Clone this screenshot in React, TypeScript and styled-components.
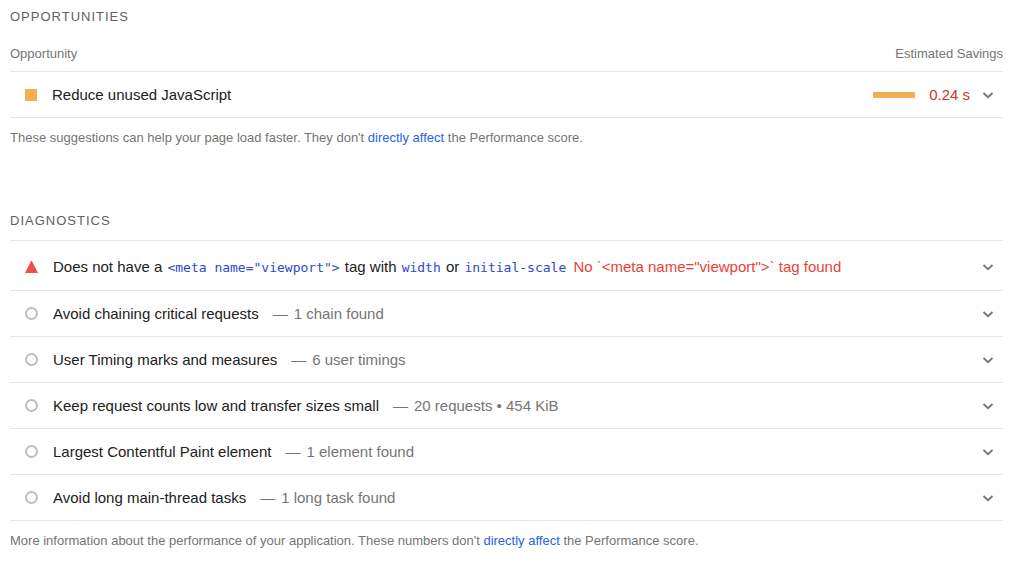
import React from "react";
import styled, { createGlobalStyle } from "styled-components";

const GlobalStyle = createGlobalStyle`
  * { box-sizing: border-box; }
  body {
    margin: 0;
    background: #fff;
    color: #212121;
    font-family: "Liberation Sans", Arial, sans-serif;
    font-size: 15px;
    line-height: 20px;
  }
`;

const Report = styled.main`
  padding: 7px 21px 6px 10px;
`;

const Group = styled.section`
  & + & {
    margin-top: 63px;
  }
`;

const GroupTitle = styled.h2<{ $gap: number }>`
  margin: 0 0 ${(p) => p.$gap}px;
  font-size: 13px;
  font-weight: 400;
  line-height: 20px;
  letter-spacing: 1px;
  text-transform: uppercase;
  color: #616161;
`;

const ColumnHeader = styled.div`
  display: flex;
  justify-content: space-between;
  padding-bottom: 7px;
  font-size: 13px;
  color: #757575;
`;

const AuditList = styled.ul`
  margin: 0;
  padding: 0;
  list-style: none;
  border-top: 1px solid #e6e6e6;
`;

const Audit = styled.li`
  border-bottom: 1px solid #e6e6e6;
`;

const AuditToggle = styled.button<{ $tall?: boolean }>`
  display: flex;
  align-items: center;
  gap: 15px;
  width: 100%;
  min-height: ${(p) => (p.$tall ? 49 : 45)}px;
  padding: ${(p) => (p.$tall ? "3px 8px 0 15px" : "0 8px 0 15px")};
  border: 0;
  background: none;
  color: inherit;
  font: inherit;
  text-align: left;
  cursor: pointer;
`;

const AuditTitle = styled.span`
  flex: 1;
`;

const Dash = styled.span`
  margin: 0 6px 0 14px;
  color: #757575;
`;

const Detail = styled.span`
  color: #757575;
`;

const ErrorText = styled.span`
  margin-left: 2px;
  color: #eb3f36;
`;

const Code = styled.code`
  margin: 0 1px;
  font-family: "DejaVu Sans Mono", monospace;
  font-size: 13px;
  color: #2a4acb;
`;

const Square = styled.span`
  width: 12px;
  height: 12px;
  background: #f5ae52;
`;

const Ring = styled.span`
  width: 13px;
  height: 13px;
  border: 2px solid #bdbdbd;
  border-radius: 50%;
`;

const Savings = styled.span`
  display: flex;
  align-items: center;
  gap: 14px;
  margin-right: -4px;
  color: #c7371f;
`;

const SavingsBar = styled.span`
  width: 42px;
  height: 6px;
  border-radius: 1px;
  background: #f5ae52;
`;

const Note = styled.p`
  margin: 0;
  padding-top: 10px;
  font-size: 13px;
  color: #757575;
`;

const NoteLink = styled.a`
  color: #2962e8;
  text-decoration: none;
`;

const Triangle = () => (
  <svg width="13" height="13" viewBox="0 0 13 13" aria-hidden="true">
    <path d="M6.5 -0.8 13 12H0z" fill="#ef5045" />
  </svg>
);

const Chevron = () => (
  <svg width="14" height="14" viewBox="0 0 14 14" aria-hidden="true">
    <path d="M2.5 5 7 9.2 11.5 5" fill="none" stroke="#757575" strokeWidth="1.8" />
  </svg>
);

const diagnostics = [
  { title: "Avoid chaining critical requests", detail: "1 chain found" },
  { title: "User Timing marks and measures", detail: "6 user timings" },
  { title: "Keep request counts low and transfer sizes small", detail: "20 requests • 454 KiB" },
  { title: "Largest Contentful Paint element", detail: "1 element found" },
  { title: "Avoid long main-thread tasks", detail: "1 long task found" },
];

export default function App() {
  return (
    <>
      <GlobalStyle />
      <Report>
        <Group>
          <GroupTitle $gap={17}>Opportunities</GroupTitle>
          <ColumnHeader>
            <span>Opportunity</span>
            <span>Estimated Savings</span>
          </ColumnHeader>
          <AuditList>
            <Audit>
              <AuditToggle type="button" aria-expanded={false}>
                <Square />
                <AuditTitle>Reduce unused JavaScript</AuditTitle>
                <Savings>
                  <SavingsBar />
                  <span>0.24 s</span>
                </Savings>
                <Chevron />
              </AuditToggle>
            </Audit>
          </AuditList>
          <Note>
            These suggestions can help your page load faster. They don't{" "}
            <NoteLink href="#score">directly affect</NoteLink> the Performance score.
          </Note>
        </Group>
        <Group>
          <GroupTitle $gap={9}>Diagnostics</GroupTitle>
          <AuditList>
            <Audit>
              <AuditToggle type="button" aria-expanded={false} $tall>
                <Triangle />
                <AuditTitle>
                  Does not have a <Code>{'<meta name="viewport">'}</Code> tag with <Code>width</Code> or{" "}
                  <Code>initial-scale</Code> <ErrorText>{'No `<meta name="viewport">` tag found'}</ErrorText>
                </AuditTitle>
                <Chevron />
              </AuditToggle>
            </Audit>
            {diagnostics.map((d) => (
              <Audit key={d.title}>
                <AuditToggle type="button" aria-expanded={false}>
                  <Ring />
                  <AuditTitle>
                    {d.title}
                    <Dash>—</Dash>
                    <Detail>{d.detail}</Detail>
                  </AuditTitle>
                  <Chevron />
                </AuditToggle>
              </Audit>
            ))}
          </AuditList>
          <Note>
            More information about the performance of your application. These numbers don't{" "}
            <NoteLink href="#score">directly affect</NoteLink> the Performance score.
          </Note>
        </Group>
      </Report>
    </>
  );
}
